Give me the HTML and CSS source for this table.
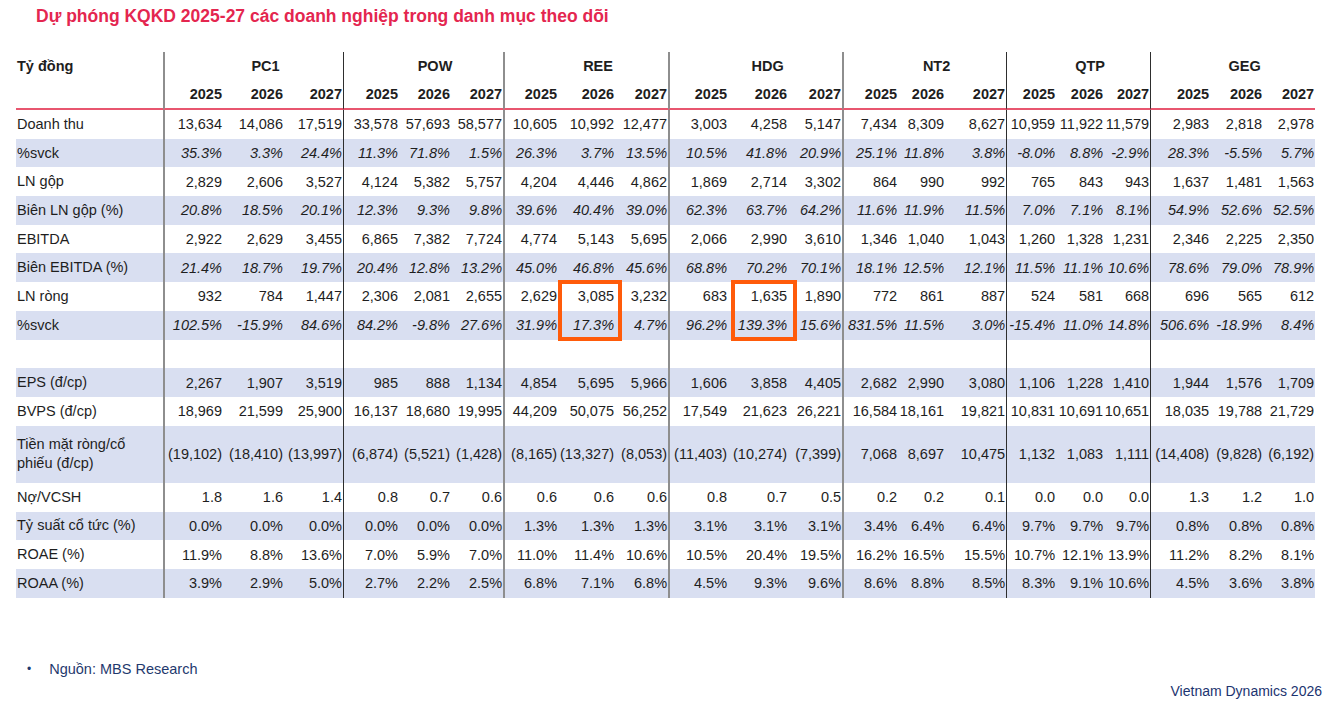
FILE: index.html
```html
<!DOCTYPE html>
<html lang="vi">
<head>
<meta charset="utf-8">
<title>Dự phóng KQKD 2025-27</title>
<link rel="stylesheet" href="styles.css">
</head>
<body>
<h1 class="title">Dự phóng KQKD 2025-27 các doanh nghiệp trong danh mục theo dõi</h1>
<div class="wrap">
<table class="fin">
<colgroup>
<col class="c-label">
<col style="width:60px"><col style="width:61px"><col style="width:59px">
<col style="width:56px"><col style="width:52px"><col style="width:52px">
<col style="width:55px"><col style="width:57px"><col style="width:53px">
<col style="width:60px"><col style="width:60px"><col style="width:54px">
<col style="width:56px"><col style="width:47px"><col style="width:61px">
<col style="width:50px"><col style="width:48px"><col style="width:46px">
<col style="width:60px"><col style="width:53px"><col style="width:52px">
</colgroup>
<thead>
<tr class="hd1"><th>Tỷ đồng</th><th colspan="3">PC1</th><th colspan="3">POW</th><th colspan="3">REE</th><th colspan="3">HDG</th><th colspan="3">NT2</th><th colspan="3">QTP</th><th colspan="3">GEG</th></tr>
<tr class="hd2"><th></th><th>2025</th><th>2026</th><th>2027</th><th>2025</th><th>2026</th><th>2027</th><th>2025</th><th>2026</th><th>2027</th><th>2025</th><th>2026</th><th>2027</th><th>2025</th><th>2026</th><th>2027</th><th>2025</th><th>2026</th><th>2027</th><th>2025</th><th>2026</th><th>2027</th></tr>
</thead>
<tbody>
<tr><td>Doanh thu</td><td>13,634</td><td>14,086</td><td>17,519</td><td>33,578</td><td>57,693</td><td>58,577</td><td>10,605</td><td>10,992</td><td>12,477</td><td>3,003</td><td>4,258</td><td>5,147</td><td>7,434</td><td>8,309</td><td>8,627</td><td>10,959</td><td>11,922</td><td>11,579</td><td>2,983</td><td>2,818</td><td>2,978</td></tr>
<tr class="band pct"><td>%svck</td><td>35.3%</td><td>3.3%</td><td>24.4%</td><td>11.3%</td><td>71.8%</td><td>1.5%</td><td>26.3%</td><td>3.7%</td><td>13.5%</td><td>10.5%</td><td>41.8%</td><td>20.9%</td><td>25.1%</td><td>11.8%</td><td>3.8%</td><td>-8.0%</td><td>8.8%</td><td>-2.9%</td><td>28.3%</td><td>-5.5%</td><td>5.7%</td></tr>
<tr><td>LN gộp</td><td>2,829</td><td>2,606</td><td>3,527</td><td>4,124</td><td>5,382</td><td>5,757</td><td>4,204</td><td>4,446</td><td>4,862</td><td>1,869</td><td>2,714</td><td>3,302</td><td>864</td><td>990</td><td>992</td><td>765</td><td>843</td><td>943</td><td>1,637</td><td>1,481</td><td>1,563</td></tr>
<tr class="band pct"><td>Biên LN gộp (%)</td><td>20.8%</td><td>18.5%</td><td>20.1%</td><td>12.3%</td><td>9.3%</td><td>9.8%</td><td>39.6%</td><td>40.4%</td><td>39.0%</td><td>62.3%</td><td>63.7%</td><td>64.2%</td><td>11.6%</td><td>11.9%</td><td>11.5%</td><td>7.0%</td><td>7.1%</td><td>8.1%</td><td>54.9%</td><td>52.6%</td><td>52.5%</td></tr>
<tr><td>EBITDA</td><td>2,922</td><td>2,629</td><td>3,455</td><td>6,865</td><td>7,382</td><td>7,724</td><td>4,774</td><td>5,143</td><td>5,695</td><td>2,066</td><td>2,990</td><td>3,610</td><td>1,346</td><td>1,040</td><td>1,043</td><td>1,260</td><td>1,328</td><td>1,231</td><td>2,346</td><td>2,225</td><td>2,350</td></tr>
<tr class="band pct"><td>Biên EBITDA (%)</td><td>21.4%</td><td>18.7%</td><td>19.7%</td><td>20.4%</td><td>12.8%</td><td>13.2%</td><td>45.0%</td><td>46.8%</td><td>45.6%</td><td>68.8%</td><td>70.2%</td><td>70.1%</td><td>18.1%</td><td>12.5%</td><td>12.1%</td><td>11.5%</td><td>11.1%</td><td>10.6%</td><td>78.6%</td><td>79.0%</td><td>78.9%</td></tr>
<tr><td>LN ròng</td><td>932</td><td>784</td><td>1,447</td><td>2,306</td><td>2,081</td><td>2,655</td><td>2,629</td><td>3,085</td><td>3,232</td><td>683</td><td>1,635</td><td>1,890</td><td>772</td><td>861</td><td>887</td><td>524</td><td>581</td><td>668</td><td>696</td><td>565</td><td>612</td></tr>
<tr class="band pct"><td>%svck</td><td>102.5%</td><td>-15.9%</td><td>84.6%</td><td>84.2%</td><td>-9.8%</td><td>27.6%</td><td>31.9%</td><td>17.3%</td><td>4.7%</td><td>96.2%</td><td>139.3%</td><td>15.6%</td><td>831.5%</td><td>11.5%</td><td>3.0%</td><td>-15.4%</td><td>11.0%</td><td>14.8%</td><td>506.6%</td><td>-18.9%</td><td>8.4%</td></tr>
<tr><td></td><td></td><td></td><td></td><td></td><td></td><td></td><td></td><td></td><td></td><td></td><td></td><td></td><td></td><td></td><td></td><td></td><td></td><td></td><td></td><td></td><td></td></tr>
<tr class="band"><td>EPS (đ/cp)</td><td>2,267</td><td>1,907</td><td>3,519</td><td>985</td><td>888</td><td>1,134</td><td>4,854</td><td>5,695</td><td>5,966</td><td>1,606</td><td>3,858</td><td>4,405</td><td>2,682</td><td>2,990</td><td>3,080</td><td>1,106</td><td>1,228</td><td>1,410</td><td>1,944</td><td>1,576</td><td>1,709</td></tr>
<tr><td>BVPS (đ/cp)</td><td>18,969</td><td>21,599</td><td>25,900</td><td>16,137</td><td>18,680</td><td>19,995</td><td>44,209</td><td>50,075</td><td>56,252</td><td>17,549</td><td>21,623</td><td>26,221</td><td>16,584</td><td>18,161</td><td>19,821</td><td>10,831</td><td>10,691</td><td>10,651</td><td>18,035</td><td>19,788</td><td>21,729</td></tr>
<tr class="band two"><td>Tiền mặt ròng/cổ<br>phiếu (đ/cp)</td><td>(19,102)</td><td>(18,410)</td><td>(13,997)</td><td>(6,874)</td><td>(5,521)</td><td>(1,428)</td><td>(8,165)</td><td>(13,327)</td><td>(8,053)</td><td>(11,403)</td><td>(10,274)</td><td>(7,399)</td><td>7,068</td><td>8,697</td><td>10,475</td><td>1,132</td><td>1,083</td><td>1,111</td><td>(14,408)</td><td>(9,828)</td><td>(6,192)</td></tr>
<tr><td>Nợ/VCSH</td><td>1.8</td><td>1.6</td><td>1.4</td><td>0.8</td><td>0.7</td><td>0.6</td><td>0.6</td><td>0.6</td><td>0.6</td><td>0.8</td><td>0.7</td><td>0.5</td><td>0.2</td><td>0.2</td><td>0.1</td><td>0.0</td><td>0.0</td><td>0.0</td><td>1.3</td><td>1.2</td><td>1.0</td></tr>
<tr class="band"><td>Tỷ suất cổ tức (%)</td><td>0.0%</td><td>0.0%</td><td>0.0%</td><td>0.0%</td><td>0.0%</td><td>0.0%</td><td>1.3%</td><td>1.3%</td><td>1.3%</td><td>3.1%</td><td>3.1%</td><td>3.1%</td><td>3.4%</td><td>6.4%</td><td>6.4%</td><td>9.7%</td><td>9.7%</td><td>9.7%</td><td>0.8%</td><td>0.8%</td><td>0.8%</td></tr>
<tr><td>ROAE (%)</td><td>11.9%</td><td>8.8%</td><td>13.6%</td><td>7.0%</td><td>5.9%</td><td>7.0%</td><td>11.0%</td><td>11.4%</td><td>10.6%</td><td>10.5%</td><td>20.4%</td><td>19.5%</td><td>16.2%</td><td>16.5%</td><td>15.5%</td><td>10.7%</td><td>12.1%</td><td>13.9%</td><td>11.2%</td><td>8.2%</td><td>8.1%</td></tr>
<tr class="band"><td>ROAA (%)</td><td>3.9%</td><td>2.9%</td><td>5.0%</td><td>2.7%</td><td>2.2%</td><td>2.5%</td><td>6.8%</td><td>7.1%</td><td>6.8%</td><td>4.5%</td><td>9.3%</td><td>9.6%</td><td>8.6%</td><td>8.8%</td><td>8.5%</td><td>8.3%</td><td>9.1%</td><td>10.6%</td><td>4.5%</td><td>3.6%</td><td>3.8%</td></tr>
</tbody>
</table>
<div class="hl hl-ree"></div>
<div class="hl hl-hdg"></div>
</div>
<p class="source"><span class="bullet">•</span><span>Nguồn: MBS Research</span></p>
<p class="brand">Vietnam Dynamics 2026</p>
</body>
</html>
```
FILE: styles.css
```css
html, body {
  margin: 0;
  padding: 0;
  background: #ffffff;
}
body {
  font-family: "Liberation Sans", Arial, sans-serif;
  color: #222222;
  width: 1327px;
  height: 702px;
  overflow: hidden;
}
.title {
  margin: 0;
  padding: 6px 0 0 36px;
  font-size: 17.5px;
  line-height: 20px;
  font-weight: bold;
  color: #e4264f;
}
.wrap {
  position: relative;
  margin: 26px 0 0 16px;
  width: 1299px;
}
.fin {
  border-collapse: separate;
  border-spacing: 0;
  table-layout: fixed;
  width: 1299px;
  font-size: 14.5px;
  color: #1e1e1e;
}
.c-label { width: 147px; }
.fin th, .fin td {
  padding: 0 1px 0 0;
  white-space: nowrap;
  text-align: right;
  vertical-align: middle;
  line-height: 18px;
  font-weight: normal;
}
.hd1 { height: 28px; }
.hd2 { height: 30px; }
.hd1 th {
  font-weight: bold;
  text-align: center;
  padding-left: 24px;
}
.hd1 th:first-child {
  text-align: left;
  padding-left: 1px;
}
.hd2 th {
  font-weight: bold;
  border-bottom: 2px solid #e8566f;
}
.fin tbody tr { height: 28.7px; }
.fin tbody tr.two { height: 57.4px; }
.fin tbody td:first-child {
  text-align: left;
  padding-left: 1px;
  white-space: normal;
  line-height: 19px;
}
.band { background: #d9dff1; }
.pct td:not(:first-child) { font-style: italic; }

/* group separators */
.hd1 th:nth-child(2), .hd1 th:nth-child(4), .hd1 th:nth-child(5), .hd1 th:nth-child(6),
.hd2 th:nth-child(2), .hd2 th:nth-child(8), .hd2 th:nth-child(11), .hd2 th:nth-child(14),
.fin tbody td:nth-child(2), .fin tbody td:nth-child(8), .fin tbody td:nth-child(11), .fin tbody td:nth-child(14) {
  border-left: 2px solid #8e8e8e;
}
.hd1 th:nth-child(3), .hd1 th:nth-child(7), .hd1 th:nth-child(8),
.hd2 th:nth-child(5), .hd2 th:nth-child(17), .hd2 th:nth-child(20),
.fin tbody td:nth-child(5), .fin tbody td:nth-child(17), .fin tbody td:nth-child(20) {
  border-left: 1px solid #2e2e2e;
}

.hl {
  position: absolute;
  box-sizing: border-box;
  border: 4px solid #ff5b0a;
  top: 228px;
  height: 61px;
}
.hl-ree { left: 542px; width: 64px; }
.hl-hdg { left: 715px; width: 66px; }

.source {
  margin: 62px 0 0 27px;
  display: flex;
  gap: 18px;
  font-size: 14.5px;
  line-height: 18px;
  color: #1f3a6e;
}
.bullet { font-size: 12px; }
.brand {
  margin: 4px 0 0 0;
  padding-right: 5px;
  text-align: right;
  font-size: 14px;
  line-height: 18px;
  color: #1c3470;
}
```
